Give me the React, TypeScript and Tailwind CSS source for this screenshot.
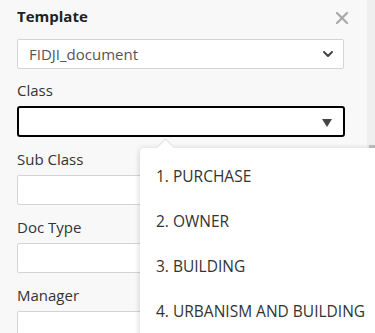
import { ChevronDown, X } from "lucide-react";

const options = [
  "1. PURCHASE",
  "2. OWNER",
  "3. BUILDING",
  "4. URBANISM AND BUILDING",
];

const fields = ["Sub Class", "Doc Type", "Manager"];

export default function App() {
  return (
    <div
      className="relative flex h-[333px] w-[375px] overflow-hidden bg-[#f8f8f8] text-[#333]"
      style={{ fontFamily: '"Open Sans", "Noto Sans", sans-serif' }}
    >
      <div className="w-[367px] shrink-0 px-[17px] pt-[4px]">
        <div className="flex h-[24px] items-center justify-between">
          <h2 className="text-[15px] font-bold text-[#222]">Template</h2>
          <X className="mr-[-2px] mt-[4px] h-[20px] w-[20px] text-[#aaa]" strokeWidth={2.8} />
        </div>

        <div className="mt-[11px] flex h-[30px] w-[327px] items-center justify-between rounded-[2px] border border-[#d4d4d4] bg-white pl-[11px] pr-[7px]">
          <span className="text-[15px] text-[#555]">FIDJI_document</span>
          <ChevronDown className="h-[16px] w-[16px] text-[#444]" strokeWidth={3} />
        </div>

        <label className="mt-[11px] block h-[20px] text-[15px] leading-[20px]">Class</label>
        <div className="mt-[6px] flex h-[31px] w-[328px] items-center justify-end rounded-[3px] border-2 border-black bg-white pr-[11px]">
          <svg width="10" height="8" viewBox="0 0 10 8" className="mt-[2px]">
            <path d="M0 0 H10 L5 8 Z" fill="#444" />
          </svg>
        </div>

        {fields.map((f) => (
          <div key={f}>
            <label className="mt-[12px] block h-[20px] text-[15px] leading-[20px]">{f}</label>
            <div className="mt-[6px] h-[30px] w-[327px] rounded-[2px] border border-[#d4d4d4] bg-white" />
          </div>
        ))}
      </div>

      <div className="relative flex-1 bg-[#efefef]">
        <div className="absolute left-[2px] right-0 top-[145px] h-[60px] bg-[#c1c1c1]" />
      </div>

      {/* dropdown popover */}
      <div className="absolute left-[140px] top-[148px] h-[200px] w-[260px] rounded-tl-[4px] bg-white shadow-[0_1px_6px_rgba(0,0,0,0.18)]">
        <div className="absolute left-[19px] top-[-7px] h-[13px] w-[13px] rotate-45 border-l border-t border-[#e2e2e2] bg-white" />
        <ul className="relative pt-[17px]">
          {options.map((o) => (
            <li key={o} className="h-[45px] pl-[16px] text-[15.5px] leading-[22px] text-[#333]">
              {o}
            </li>
          ))}
        </ul>
      </div>
    </div>
  );
}
